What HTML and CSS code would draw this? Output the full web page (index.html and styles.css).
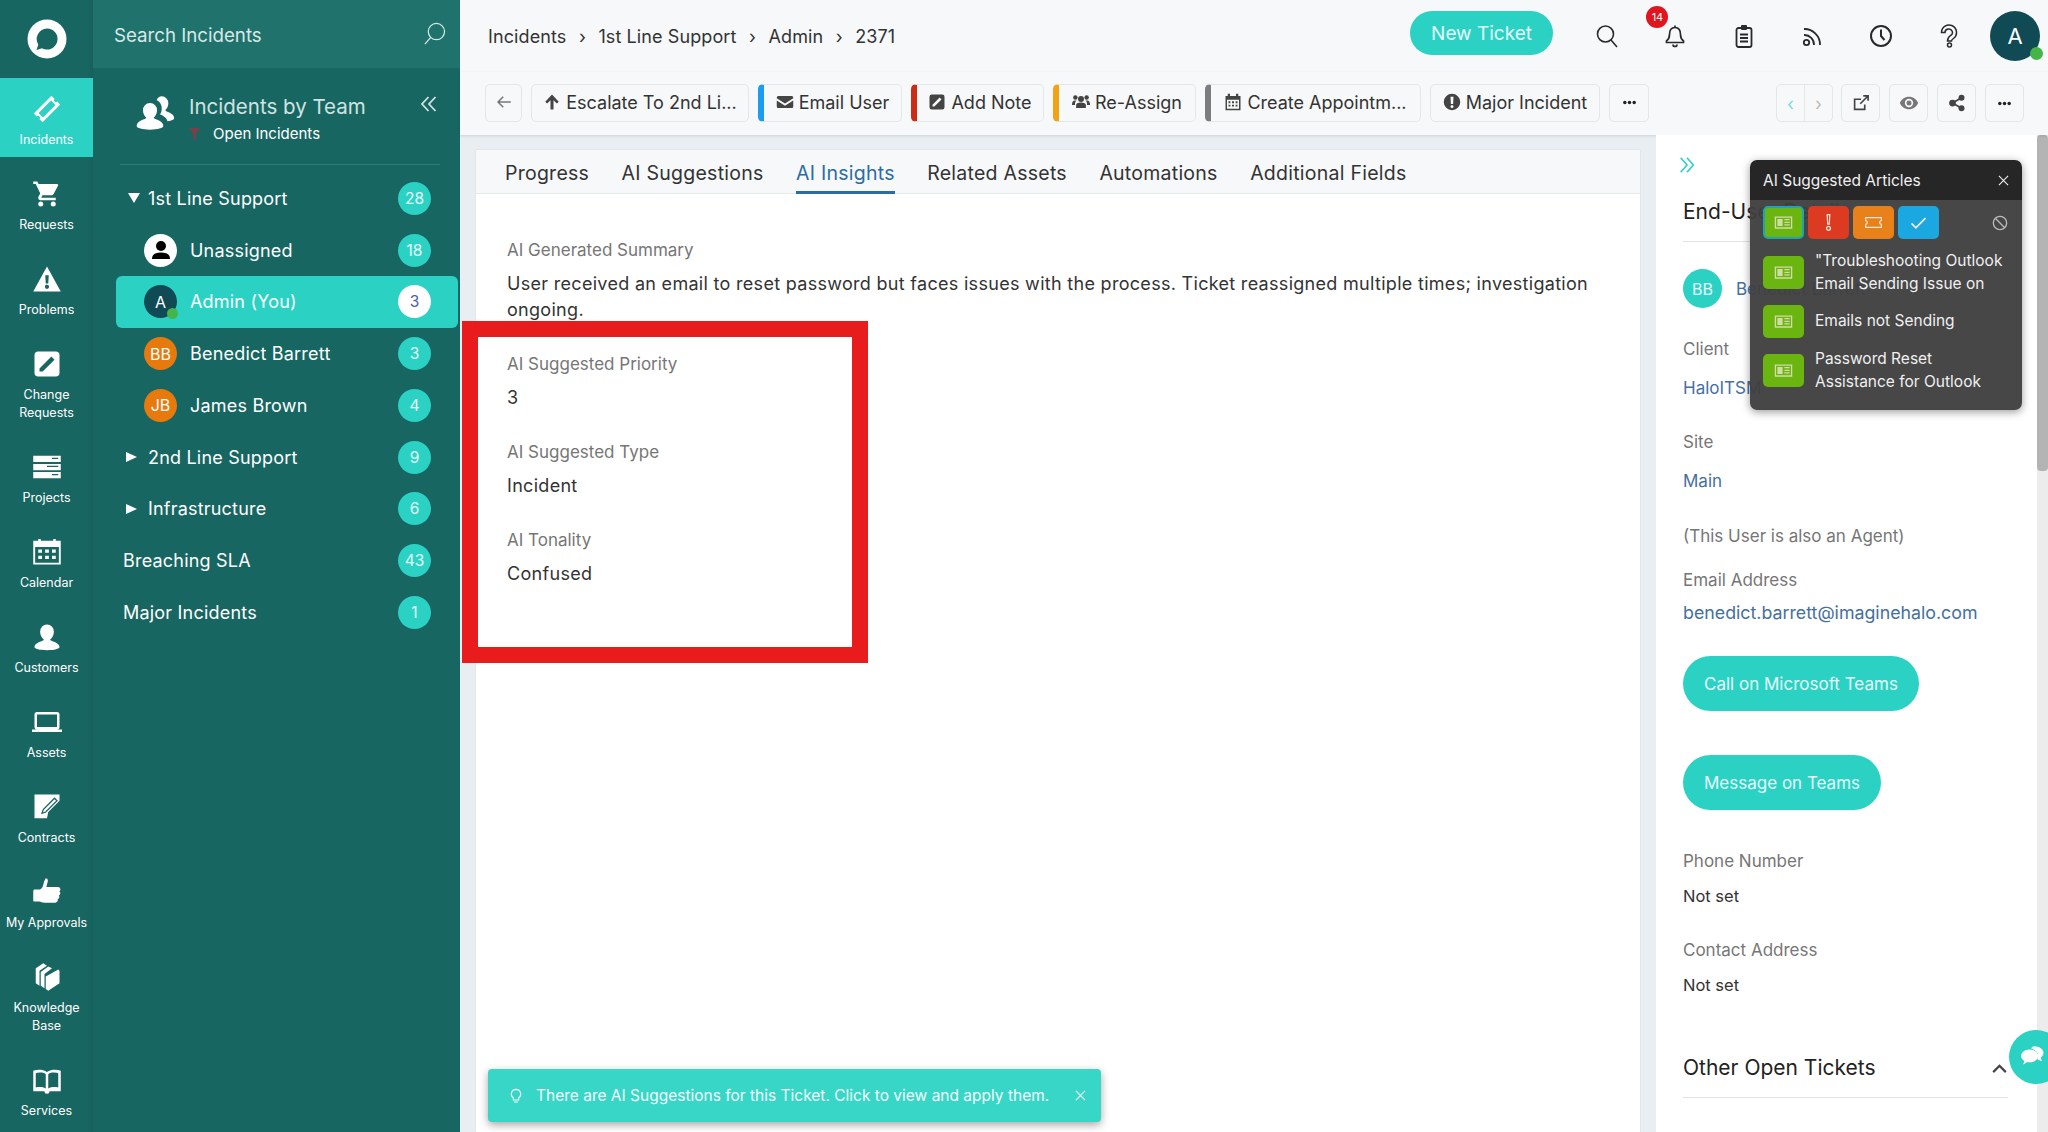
FILE: index.html
```html
<!DOCTYPE html>
<html lang="en">
<head>
    <meta charset="UTF-8">
    <meta name="viewport" content="width=device-width, initial-scale=1.0">
    <title>Incidents - 2371</title>
    <link rel="stylesheet" href="styles.css">
</head>
<body>
    <!-- shared icons -->
    <svg class="sprite" aria-hidden="true">
        <symbol id="i-cart" viewBox="0 0 24 24"><path d="M17 18a2 2 0 1 0 0 4 2 2 0 0 0 0-4zM1 2v2h2l3.600 7.600-1.400 2.400A2 2 0 0 0 7 17h12v-2H7.400l1-2h7.200c.7 0 1.400-.4 1.700-1L21 5a1 1 0 0 0-1-1H5.200l-.9-2zM7 18a2 2 0 1 0 0 4 2 2 0 0 0 0-4z"/></symbol>
        <symbol id="i-alert" viewBox="0 0 24 24"><path fill-rule="evenodd" d="M1 22 12 2l11 20zM10.600 9l.4 6.500h2l.4-6.500zM12 16.500a1.700 1.700 0 1 0 0 3.400 1.700 1.700 0 0 0 0-3.400z"/></symbol>
        <symbol id="i-edit" viewBox="0 0 24 24"><path fill-rule="evenodd" d="M5 2h14a3 3 0 0 1 3 3v14a3 3 0 0 1-3 3H5a3 3 0 0 1-3-3V5a3 3 0 0 1 3-3zm10.500 4L6 15.500V18h2.500L18 8.500z"/></symbol>
        <symbol id="i-user" viewBox="0 0 24 24"><path d="M12 2a5.500 5.500 0 0 1 5.500 6c0 2.500-1.500 5-3 6 0 1.500 7.500 2 7.500 6 0 1.500-4 2.500-10 2.500S2 21.500 2 20c0-4 7.500-4.500 7.500-6-1.500-1-3-3.500-3-6A5.500 5.500 0 0 1 12 2z"/></symbol>
        <symbol id="i-laptop" viewBox="0 0 24 24"><path d="M4 6h16v10H4zm16 12a2 2 0 0 0 2-2V6a2 2 0 0 0-2-2H4a2 2 0 0 0-2 2v10a2 2 0 0 0 2 2H0v2h24v-2z"/></symbol>
        <symbol id="i-thumb" viewBox="0 0 24 24"><path d="M11 1c1.500 0 2 1.500 1.500 3L11.500 8H21a2 2 0 0 1 1 3.500 2 2 0 0 1-.5 3.300 2 2 0 0 1-1 3 2 2 0 0 1-2 2.700H10c-2 0-3-1-4-1H2c-1 0-1-.5-1-1v-7c0-1 .5-1.500 1-1.500h4c2 0 3-3 3.500-6z"/></symbol>
        <symbol id="i-book" viewBox="0 0 24 24"><path fill-rule="evenodd" d="M1 4.500C4 3.500 9 3.500 12 5.500c3-2 8-2 11-1V21H14a2 2 0 0 1-4 0H1zM3 6.500V18c2.500-.5 5.500-.5 8 .7V7.300C9 5.800 5.500 5.800 3 6.500zm18 0c-2.500-.7-6-.7-8 .8v11.400c2.500-1.200 5.500-1.200 8-.7z"/></symbol>
        <symbol id="i-group" viewBox="0 0 24 24"><path d="M9 6a4.200 4.200 0 0 1 4.200 4.500c0 2-1 3.500-2 4.300 0 1 5.800 1.500 5.800 5 0 1.200-3.500 2.200-8 2.200s-8-1-8-2.200c0-3.500 5.800-4 5.800-5-1-.8-2-2.300-2-4.300A4.200 4.200 0 0 1 9 6zM16 2a4 4 0 0 1 4 4.300c0 1.800-1 3.300-1.800 4 0 1 5.300 1.500 5.300 4.700 0 1-1.500 1.700-4 2-.7-2.500-3-3.500-4.500-4.200.8-1.300 1.200-2.500 1-4.300-.2-2-1.500-3.500-3-4.300C13.700 2.800 14.800 2 16 2z"/></symbol>
        <symbol id="i-search" viewBox="0 0 24 24"><g fill="none" stroke="currentColor" stroke-width="1.600"><circle cx="10.500" cy="10" r="8"/><path d="m16 16 6 7"/></g></symbol>
        <symbol id="i-bell" viewBox="0 0 24 24"><g fill="none" stroke="currentColor" stroke-width="1.700"><path d="M12 3.500c-4 0-5.500 3-5.500 7 0 3-1 5-3 6.500v1.500h17V17c-2-1.500-3-3.500-3-6.500 0-4-1.500-7-5.500-7z"/><path d="M12 1.500v2M10 20.500a2 2 0 0 0 4 0"/></g></symbol>
        <symbol id="i-clip" viewBox="0 0 24 24"><g fill="none" stroke="currentColor" stroke-width="1.800"><rect x="4.500" y="4" width="15" height="19" rx="2"/><path d="M8 10.500h8M8 14h8M8 17.500h8"/></g><rect x="9" y="1" width="6" height="5" rx="1"/></symbol>
        <symbol id="i-rss" viewBox="0 0 24 24"><g fill="none" stroke="currentColor" stroke-width="1.800"><circle cx="6.500" cy="18.500" r="2.700"/><path d="M4 11a9.500 9.500 0 0 1 10 10M4 5a15.500 15.500 0 0 1 16 16"/></g></symbol>
        <symbol id="i-clock" viewBox="0 0 24 24"><g fill="none" stroke="currentColor" stroke-width="2"><circle cx="12" cy="12" r="10"/><path d="M12 5.500V12l3.500 4"/></g></symbol>
        <symbol id="i-help" viewBox="0 0 24 24"><g fill="none" stroke="currentColor" stroke-width="1.500"><path d="M4.500 8.500a7.500 7.500 0 1 1 12 6c-1.500 1-2 1.500-2 2.500h-4c0-3 1-4 3-5.500a3.700 3.500 0 1 0-5.500-3z"/><circle cx="12.500" cy="21" r="2"/></g></symbol>
        <symbol id="i-ticket" viewBox="0 0 24 24"><path fill-rule="evenodd" d="M2 7h20v3.500a1.500 1.500 0 0 0 0 3V17H2v-3.500a1.500 1.500 0 0 0 0-3zm3 2.500v5h14v-5z"/></symbol>
        <symbol id="i-article" viewBox="0 0 24 24"><path d="M2 5h20v14H2zm1.500 1.500v11h17v-11zM5 8h6v8H5zm8 0h6v1.500h-6zm0 3h6v1.500h-6zm0 3h6v1.500h-6z" fill-rule="evenodd"/></symbol>
        <symbol id="i-dots" viewBox="0 0 24 24"><circle cx="4.500" cy="12" r="2.800"/><circle cx="12" cy="12" r="2.800"/><circle cx="19.500" cy="12" r="2.800"/></symbol>
    </svg>

    <nav class="rail">
        <div class="rail-logo">
            <svg width="40" height="40" viewBox="0 0 40 40"><circle cx="20" cy="20" r="19.500" fill="#fff"/><path d="M20 9.500a10.500 10.500 0 1 1-5 19.700L9.500 31l1.800-5.500A10.500 10.500 0 0 1 20 9.500z" fill="#186662"/></svg>
        </div>
        <a class="rail-item active">
            <svg class="rail-icon tilted" viewBox="0 0 24 24"><use href="#i-ticket"/></svg>
            <span>Incidents</span>
        </a>
        <a class="rail-item">
            <svg class="rail-icon" viewBox="0 0 24 24"><use href="#i-cart"/></svg>
            <span>Requests</span>
        </a>
        <a class="rail-item">
            <svg class="rail-icon" viewBox="0 0 24 24"><use href="#i-alert"/></svg>
            <span>Problems</span>
        </a>
        <a class="rail-item tall">
            <svg class="rail-icon" viewBox="0 0 24 24"><use href="#i-edit"/></svg>
            <span>Change<br>Requests</span>
        </a>
        <a class="rail-item">
            <svg class="rail-icon" viewBox="0 0 24 24"><path d="M1 3h22v5H1zm0 6.500h22v5H1zM1 16h22v5H1z"/><path d="M16 5h5M12 11.500h9M16 18h5" stroke="#186662" stroke-width="1"/></svg>
            <span>Projects</span>
        </a>
        <a class="rail-item">
            <svg class="rail-icon" viewBox="0 0 24 24"><path fill-rule="evenodd" d="M5 1.500h2V3h10V1.500h2V3h4v19H1V3h4zM2.500 8v12.500h19V8zM5 10h3v2.500H5zm5.500 0h3v2.500h-3zm5.500 0h3v2.500h-3zM5 15h3v2.500H5zm5.500 0h3v2.500h-3zm5.500 0h3v2.500h-3z"/></svg>
            <span>Calendar</span>
        </a>
        <a class="rail-item">
            <svg class="rail-icon" viewBox="0 0 24 24"><use href="#i-user"/></svg>
            <span>Customers</span>
        </a>
        <a class="rail-item">
            <svg class="rail-icon" viewBox="0 0 24 24"><use href="#i-laptop"/></svg>
            <span>Assets</span>
        </a>
        <a class="rail-item">
            <svg class="rail-icon" viewBox="0 0 24 24"><path d="M2 2h20v5l-9 9-1 5H2z"/><path d="m8 17 1-3 9-9 2 2-9 9z" fill="#fff" stroke="#186662" stroke-width="1"/></svg>
            <span>Contracts</span>
        </a>
        <a class="rail-item">
            <svg class="rail-icon" viewBox="0 0 24 24"><use href="#i-thumb"/></svg>
            <span>My Approvals</span>
        </a>
        <a class="rail-item tall">
            <svg class="rail-icon" viewBox="0 0 24 24"><path d="M3 5 9 1l3 2-6 4v12l-3-2zm4 3 6-4.500 3 1.500-6 4.500V21l-3-2zm4 3.500L21 6c1 .5 1 1 1 2v9l-9 6-2-1.500z"/></svg>
            <span>Knowledge<br>Base</span>
        </a>
        <a class="rail-item">
            <svg class="rail-icon" viewBox="0 0 24 24"><use href="#i-book"/></svg>
            <span>Services</span>
        </a>
    </nav>

    <aside class="sidebar">
        <div class="side-search">
            <span>Search Incidents</span>
            <svg class="side-search-icon" viewBox="0 0 24 24"><g fill="none" stroke="currentColor" stroke-width="1.300"><circle cx="14" cy="10" r="8.500"/><path d="M8 16 2 23"/></g></svg>
        </div>
        <div class="side-head">
            <svg class="side-head-icon" viewBox="0 0 24 24"><use href="#i-group"/></svg>
            <div class="side-head-text">
                <div class="side-title">Incidents by Team</div>
                <div class="side-filter"><svg class="funnel" viewBox="0 0 12 14"><path d="M0 0h12L7.500 6v8L4.500 11V6z"/></svg>Open Incidents</div>
            </div>
            <svg class="side-collapse" viewBox="0 0 20 20"><path d="M9.500 3 3 10l6.500 7M16.500 3 10 10l6.500 7" fill="none" stroke="currentColor" stroke-width="1.800"/></svg>
        </div>
        <ul class="teams">
            <li class="team group"><span class="caret down"></span><span class="team-name">1st Line Support</span><span class="count">28</span></li>
            <li class="team member"><span class="avatar white"><svg width="24" height="24" viewBox="0 0 24 24"><circle cx="12" cy="8" r="5"/><path d="M3 21c0-5 4-6.500 9-6.500s9 1.500 9 6.500z"/></svg></span><span class="team-name">Unassigned</span><span class="count">18</span></li>
            <li class="team member selected"><span class="avatar navy">A<i class="dot"></i></span><span class="team-name">Admin (You)</span><span class="count">3</span></li>
            <li class="team member"><span class="avatar orange">BB</span><span class="team-name">Benedict Barrett</span><span class="count">3</span></li>
            <li class="team member"><span class="avatar orange">JB</span><span class="team-name">James Brown</span><span class="count">4</span></li>
            <li class="team group"><span class="caret right"></span><span class="team-name">2nd Line Support</span><span class="count">9</span></li>
            <li class="team group"><span class="caret right"></span><span class="team-name">Infrastructure</span><span class="count">6</span></li>
            <li class="team top"><span class="team-name">Breaching SLA</span><span class="count">43</span></li>
            <li class="team top"><span class="team-name">Major Incidents</span><span class="count">1</span></li>
        </ul>
    </aside>

    <div class="main">
        <header class="topbar">
            <div class="crumbs">
                <span>Incidents</span><b>›</b><span>1st Line Support</span><b>›</b><span>Admin</span><b>›</b><span>2371</span>
            </div>
            <button class="new-ticket">New Ticket</button>
            <div class="top-icons">
                <svg class="top-icon" viewBox="0 0 24 24"><use href="#i-search"/></svg>
                <span class="bell"><svg class="top-icon" viewBox="0 0 24 24"><use href="#i-bell"/></svg><em class="bell-count">14</em></span>
                <svg class="top-icon" viewBox="0 0 24 24"><use href="#i-clip"/></svg>
                <svg class="top-icon" viewBox="0 0 24 24"><use href="#i-rss"/></svg>
                <svg class="top-icon" viewBox="0 0 24 24"><use href="#i-clock"/></svg>
                <svg class="top-icon" viewBox="0 0 24 24"><use href="#i-help"/></svg>
            </div>
            <div class="top-avatar">A<i class="dot"></i></div>
        </header>

        <div class="toolbar">
            <div class="tools">
                <button class="tool"><svg class="tool-icon back" viewBox="0 0 24 24"><path d="M21 12H4m7-7-7 7 7 7" fill="none" stroke="currentColor" stroke-width="2"/></svg></button>
                <button class="tool"><svg class="tool-icon" viewBox="0 0 24 24"><path d="M12 2 3 11.500l2.500 2.500L10 9.500V22h4V9.500l4.500 4.500 2.500-2.500z"/></svg>Escalate To 2nd Li...</button>
                <button class="tool blue"><svg class="tool-icon" viewBox="0 0 24 24"><path d="M3 4h18a2 2 0 0 1 2 2v1l-11 7L1 7V6a2 2 0 0 1 2-2zM1 10l11 7 11-7v8a2 2 0 0 1-2 2H3a2 2 0 0 1-2-2z"/></svg>Email User</button>
                <button class="tool red"><svg class="tool-icon" viewBox="0 0 24 24"><use href="#i-edit"/></svg>Add Note</button>
                <button class="tool amber"><svg class="tool-icon" viewBox="0 0 24 24"><circle cx="12" cy="8" r="4"/><circle cx="4.500" cy="6" r="3"/><circle cx="19.500" cy="6" r="3"/><path d="M5.500 20v-4c0-2 2-3.500 6.500-3.500s6.500 1.500 6.500 3.500v4zM0 15c0-3 1.500-5 4-5h2c-1.500 1-2 2.500-2 5v1H0zm24 0c0-3-1.500-5-4-5h-2c1.500 1 2 2.500 2 5v1h4z"/></svg>Re-Assign</button>
                <button class="tool grey"><svg class="tool-icon" viewBox="0 0 24 24"><path fill-rule="evenodd" d="M5 1h3v3h8V1h3v3h3v19H2V4h3zM4 9v12h16V9zm2 2h2.500v2.500H6zm4.700 0h2.600v2.500h-2.600zm4.800 0H18v2.500h-2.500zM6 15.500h2.500V18H6zm4.700 0h2.600V18h-2.600zm4.800 0H18V18h-2.500z"/></svg>Create Appointm...</button>
                <button class="tool"><svg class="tool-icon" viewBox="0 0 24 24"><path fill-rule="evenodd" d="M12 1a11 11 0 1 1 0 22 11 11 0 0 1 0-22zm-2 4 .5 9.500h3L14 5zm2 11a2 2 0 1 0 0 4 2 2 0 0 0 0-4z"/></svg>Major Incident</button>
                <button class="tool"><svg class="tool-icon small" viewBox="0 0 24 24"><use href="#i-dots"/></svg></button>
            </div>
            <div class="tools-right">
                <div class="pager">
                    <button class="page teal">‹</button>
                    <button class="page">›</button>
                </div>
                <button class="tool square"><svg class="tool-icon" viewBox="0 0 24 24"><path d="M17 14v6.500H3.500V7H12M11 13 21 3M15 2.500h6.500V9" fill="none" stroke="currentColor" stroke-width="2.200"/></svg></button>
                <button class="tool square"><svg class="tool-icon eye" viewBox="0 0 24 24"><path fill-rule="evenodd" d="M12 4.500c5 0 9.300 3.100 11 7.500-1.700 4.400-6 7.500-11 7.500S2.700 16.400 1 12c1.700-4.400 6-7.500 11-7.500zM12 7a5 5 0 1 0 0 10 5 5 0 0 0 0-10zm0 2a3 3 0 1 1 0 6 3 3 0 0 1 0-6z"/></svg></button>
                <button class="tool square"><svg class="tool-icon" viewBox="0 0 24 24"><circle cx="6" cy="12" r="4.500"/><circle cx="18" cy="5" r="4"/><circle cx="18" cy="19" r="4"/><path d="m6 12 12-7M6 12l12 7" stroke="currentColor" stroke-width="2.500"/></svg></button>
                <button class="tool square"><svg class="tool-icon small" viewBox="0 0 24 24"><use href="#i-dots"/></svg></button>
            </div>
        </div>

        <div class="content">
            <section class="panel">
                <div class="tabs">
                    <span class="tab">Progress</span>
                    <span class="tab">AI Suggestions</span>
                    <span class="tab active">AI Insights</span>
                    <span class="tab">Related Assets</span>
                    <span class="tab">Automations</span>
                    <span class="tab">Additional Fields</span>
                </div>
                <div class="insights">
                    <div class="field">
                        <div class="label">AI Generated Summary</div>
                        <p class="value summary">User received an email to reset password but faces issues with the process. Ticket reassigned multiple times; investigation ongoing.</p>
                    </div>
                    <div class="field">
                        <div class="label">AI Suggested Priority</div>
                        <p class="value">3</p>
                    </div>
                    <div class="field">
                        <div class="label">AI Suggested Type</div>
                        <p class="value">Incident</p>
                    </div>
                    <div class="field">
                        <div class="label">AI Tonality</div>
                        <p class="value">Confused</p>
                    </div>
                </div>
                <div class="callout"></div>
                <div class="toast">
                    <svg class="toast-bulb" viewBox="0 0 24 24"><path d="M12 2a7 7 0 0 0-4 12.700V18h8v-3.300A7 7 0 0 0 12 2zM9 21h6" fill="none" stroke="currentColor" stroke-width="1.800"/></svg>
                    <span class="toast-text">There are AI Suggestions for this Ticket. Click to view and apply them.</span>
                    <svg class="toast-close" viewBox="0 0 12 12"><path d="m1 1 10 10M11 1 1 11" stroke="currentColor" stroke-width="1.200"/></svg>
                </div>
            </section>

            <aside class="details">
                <svg class="details-toggle" viewBox="0 0 20 20"><path d="m3 2 7 8-7 8M10 2l7 8-7 8" fill="none" stroke="currentColor" stroke-width="1.800"/></svg>
                <h2 class="details-title">End-User Details</h2>
                <div class="details-user"><span class="avatar teal-avatar">BB</span><a class="link">Benedict Barrett</a></div>
                <div class="label">Client</div>
                <a class="link block">HaloITSM</a>
                <div class="label">Site</div>
                <a class="link block">Main</a>
                <div class="label note">(This User is also an Agent)</div>
                <div class="label">Email Address</div>
                <a class="link block email">benedict.barrett@imaginehalo.com</a>
                <button class="pill">Call on Microsoft Teams</button>
                <button class="pill">Message on Teams</button>
                <div class="label phone-label">Phone Number</div>
                <p class="value small">Not set</p>
                <div class="label">Contact Address</div>
                <p class="value small">Not set</p>
                <div class="other-head">
                    <h2>Other Open Tickets</h2>
                    <svg class="chevron" viewBox="0 0 16 10"><path d="m1 9 7-7 7 7" fill="none" stroke="currentColor" stroke-width="2.500"/></svg>
                </div>

                <div class="popover">
                    <div class="pop-head">
                        <span>AI Suggested Articles</span>
                        <svg class="pop-close" viewBox="0 0 12 12"><path d="m1 1 10 10M11 1 1 11" stroke="currentColor" stroke-width="1.200"/></svg>
                    </div>
                    <div class="pop-body">
                        <div class="pop-filters">
                            <span class="chip green on"><svg viewBox="0 0 24 24"><use href="#i-article"/></svg></span>
                            <span class="chip red-chip"><svg viewBox="0 0 24 24"><path d="M10.500 3h3l-.6 11h-1.800zM12 16.500a2.200 2.200 0 1 0 0 4.400 2.200 2.200 0 0 0 0-4.400z" fill="none" stroke="currentColor" stroke-width="1.400"/></svg></span>
                            <span class="chip orange-chip"><svg viewBox="0 0 24 24"><path d="M3 6.500h18V10a2 2 0 0 0 0 4v3.500H3V14a2 2 0 0 0 0-4z" fill="none" stroke="currentColor" stroke-width="1.400"/></svg></span>
                            <span class="chip blue-chip"><svg viewBox="0 0 24 24"><path d="m4 13 5 5L20 7" fill="none" stroke="currentColor" stroke-width="2"/></svg></span>
                            <svg class="pop-ban" viewBox="0 0 24 24"><g fill="none" stroke="currentColor" stroke-width="2"><circle cx="12" cy="12" r="10"/><path d="m5 5 14 14"/></g></svg>
                        </div>
                        <div class="pop-row"><span class="chip green"><svg viewBox="0 0 24 24"><use href="#i-article"/></svg></span><span class="pop-text">"Troubleshooting Outlook Email Sending Issue on</span></div>
                        <div class="pop-row"><span class="chip green"><svg viewBox="0 0 24 24"><use href="#i-article"/></svg></span><span class="pop-text">Emails not Sending</span></div>
                        <div class="pop-row"><span class="chip green"><svg viewBox="0 0 24 24"><use href="#i-article"/></svg></span><span class="pop-text">Password Reset<br>Assistance for Outlook</span></div>
                    </div>
                </div>

                <div class="chat-bubble"><svg viewBox="0 0 30 24"><path d="M9 5c4.400 0 8 2.700 8 6s-3.600 6-8 6c-.8 0-1.500 0-2.200-.2L3 19l1-3.300C2.300 14.600 1 13 1 11c0-3.300 3.600-6 8-6z"/><path d="M13 2c5 0 9 2.700 9 6 0 1.800-1 3.300-2.500 4.400l1 3.600-4.300-2c.5-1 .8-2 .8-3 0-3.500-3-6-6.500-7 .8-1.300 1.700-2 2.500-2z"/></svg></div>
            </aside>
            <div class="scrollbar"><div class="thumb"></div></div>
        </div>
    </div>
</body>
</html>
```

FILE: styles.css
```css
* {
    box-sizing: border-box;
}
html, body {
    margin: 0;
    height: 1132px;
    overflow: hidden;
}
body {
    display: flex;
    font-family: Inter, "Open Sans", sans-serif;
    color: #333;
    background-color: #e9eef3;
}
p {
    margin: 0;
}
h2 {
    margin: 0;
    font-weight: 400;
}
button {
    font-family: inherit;
    cursor: pointer;
}
.sprite {
    display: none;
}

/* left icon rail */
.rail {
    width: 93px;
    flex: none;
    background-color: #186662;
    color: #fff;
    box-shadow: inset -6px 0 6px -6px rgba(0, 0, 0, 0.12);
}
.rail-logo {
    height: 78px;
    display: flex;
    align-items: center;
    justify-content: center;
}
.rail-item {
    display: flex;
    flex-direction: column;
    align-items: center;
    min-height: 79px;
    margin-bottom: 6px;
    padding-top: 16px;
    font-size: 12.5px;
    line-height: 18px;
    text-align: center;
}
.rail-item.tall {
    margin-bottom: 14px;
}
.rail-item.active {
    background-color: #2bd2c4;
}
.rail-icon {
    width: 30px;
    height: 30px;
    margin-bottom: 7px;
    fill: #fff;
}
.tilted {
    transform: rotate(-45deg);
}

/* sidebar with the team list */
.sidebar {
    width: 367px;
    flex: none;
    background-color: #186662;
    color: #fff;
}
.side-search {
    height: 68px;
    padding: 2px 14px 0 21px;
    display: flex;
    align-items: center;
    justify-content: space-between;
    background-color: #20736d;
    font-size: 18.7px;
    color: #d8e8e6;
}
.side-search-icon {
    width: 23px;
    height: 23px;
    margin-top: -4px;
}
.side-head {
    height: 97px;
    margin: 0 20px 0 27px;
    padding: 25px 0 0 15px;
    display: flex;
    border-bottom: 1px solid #2f7c77;
}
.side-head-icon {
    width: 40px;
    height: 40px;
    fill: #fff;
}
.side-head-text {
    margin-left: 14px;
    flex: 1;
}
.side-title {
    font-size: 20.5px;
    line-height: 28px;
    color: #cfe3e1;
}
.side-filter {
    display: flex;
    align-items: center;
    margin-top: 3px;
    margin-left: -5px;
    font-size: 15px;
    line-height: 20px;
}
.funnel {
    width: 11px;
    height: 13px;
    margin: 0 13px 0 5px;
    fill: #7a3f48;
}
.side-collapse {
    width: 20px;
    height: 20px;
    margin-top: 1px;
    margin-right: 1px;
    color: #cfe3e1;
}
.teams {
    list-style: none;
    margin: 7.5px 0 0 23px;
    padding: 0;
}
.team {
    height: 51.75px;
    display: flex;
    align-items: center;
    padding-right: 29px;
    font-size: 18px;
    letter-spacing: 0.2px;
    border-radius: 6px;
}
.team-name {
    flex: 1;
}
.team.member {
    padding-left: 28px;
}
.team.top {
    padding-left: 7px;
}
.team.selected {
    background-color: #2bd2c4;
    margin-right: 2px;
    padding-right: 27px;
}
.caret {
    width: 0;
    height: 0;
}
.caret.down {
    margin: 0 8px 0 12px;
    border-left: 6px solid transparent;
    border-right: 6px solid transparent;
    border-top: 10px solid #fff;
}
.caret.right {
    margin: 0 11px 0 10px;
    border-top: 5px solid transparent;
    border-bottom: 5px solid transparent;
    border-left: 11px solid #fff;
}
.avatar {
    position: relative;
    width: 33px;
    height: 33px;
    margin-right: 13px;
    flex: none;
    display: flex;
    align-items: center;
    justify-content: center;
    border-radius: 50%;
    font-size: 16px;
    letter-spacing: 0;
}
.avatar.white {
    background-color: #fff;
}
.avatar.navy {
    background-color: #0f4a55;
}
.avatar.orange {
    background-color: #e8790c;
}
.dot {
    position: absolute;
    right: -1px;
    bottom: -1px;
    width: 11px;
    height: 11px;
    border-radius: 50%;
    background-color: #46b549;
}
.count {
    width: 33px;
    height: 33px;
    display: flex;
    align-items: center;
    justify-content: center;
    border-radius: 50%;
    background-color: #2bd2c4;
    font-size: 15.5px;
    letter-spacing: 0;
    color: #e6fbf9;
}
.team.selected .count {
    background-color: #fff;
    color: #4a5fa5;
}

/* top bar */
.main {
    flex: 1;
    display: flex;
    flex-direction: column;
    min-width: 0;
    height: 1132px;
}
.topbar {
    height: 72px;
    padding: 0 8px 0 28px;
    display: flex;
    align-items: center;
    background-color: #f6f8fa;
}
.crumbs {
    flex: 1;
    display: flex;
    align-items: center;
    font-size: 18px;
    letter-spacing: 0.1px;
}
.crumbs b {
    margin: 0 12.5px;
    font-weight: 400;
}
.new-ticket {
    width: 143px;
    height: 44px;
    margin-top: -6px;
    border: 0;
    border-radius: 22px;
    background-color: #2bd2c4;
    color: #e6fbf9;
    font-size: 19px;
}
.top-icons {
    display: flex;
    align-items: center;
    gap: 44.4px;
    margin: 0 29px 0 42px;
}
.top-icon {
    display: block;
    width: 24px;
    height: 24px;
    fill: currentColor;
    color: #2a2a2a;
}
.bell {
    position: relative;
}
.bell-count {
    position: absolute;
    top: -18px;
    left: -17px;
    width: 22px;
    height: 22px;
    border-radius: 50%;
    background-color: #e1141f;
    color: #fff;
    font-size: 11px;
    font-style: normal;
    line-height: 22px;
    text-align: center;
}
.top-avatar {
    position: relative;
    width: 50px;
    height: 50px;
    border-radius: 50%;
    background-color: #0f4a55;
    color: #fff;
    font-size: 22px;
    line-height: 50px;
    text-align: center;
}
.top-avatar .dot {
    right: -3px;
    bottom: 1px;
    width: 13px;
    height: 13px;
}

/* action buttons */
.toolbar {
    height: 63px;
    padding: 12px 24px 13px 25px;
    display: flex;
    justify-content: space-between;
    background-color: #f6f8fa;
    box-shadow: 0 1px 3px rgba(0, 0, 0, 0.12);
    position: relative;
}
.tools {
    display: grid;
    grid-template-columns: 37px 218px 144px 133px 143px 216px 170px 40px;
    gap: 9px;
}
.tools-right {
    display: flex;
    gap: 9px;
}
.tool {
    height: 38px;
    padding: 0 0 2px;
    display: flex;
    align-items: center;
    justify-content: center;
    gap: 5px;
    border: 1px solid #e4e7ea;
    border-radius: 5px;
    background-color: #f7f8f9;
    color: #333;
    font-size: 18px;
    white-space: nowrap;
}
.tool.blue {
    border-left: 6px solid #1a9df0;
}
.tool.red {
    border-left: 6px solid #cc2c16;
}
.tool.amber {
    border-left: 6px solid #f2a313;
}
.tool.grey {
    border-left: 6px solid #7d7d7d;
}
.tool.square {
    width: 39px;
    padding: 0;
}
.tool-icon {
    width: 18px;
    height: 18px;
    flex: none;
    fill: #444;
    color: #444;
}
.tool-icon.back {
    color: #777;
}
.tool-icon.small {
    width: 15px;
    height: 15px;
    fill: #222;
}
.tool-icon.eye {
    width: 20px;
    height: 20px;
    fill: #777;
}
.pager {
    display: flex;
    width: 57px;
    height: 38px;
    margin-right: -1px;
    border: 1px solid #e4e7ea;
    border-radius: 5px;
}
.page {
    flex: 1;
    padding: 0;
    border: 0;
    background: transparent;
    color: #bbb;
    font-size: 18px;
}
.page.teal {
    color: #7fdcd4;
    border-right: 1px solid #e4e7ea;
}

/* ticket content */
.content {
    flex: 1;
    min-height: 0;
    display: flex;
    padding-left: 16px;
}
.panel {
    position: relative;
    width: 1164px;
    margin-top: 15px;
    margin-right: 16px;
    background-color: #fff;
    box-shadow: 0 0 1px rgba(0, 0, 0, 0.2);
}
.tabs {
    height: 44px;
    padding-left: 29px;
    display: flex;
    gap: 32.5px;
    background-color: #f6f8fa;
    border-bottom: 1px solid #e6e9ec;
}
.tab {
    height: 44px;
    font-size: 19.5px;
    line-height: 47px;
    letter-spacing: 0.25px;
    color: #333;
}
.tab.active {
    color: #2d6ca2;
    border-bottom: 3px solid #2d6ca2;
}
.insights {
    padding: 45px 24px 0 31px;
}
.field {
    margin-bottom: 30px;
}
.label {
    font-size: 17px;
    line-height: 22px;
    color: #767676;
}
.value {
    margin-top: 10px;
    font-size: 18px;
    line-height: 26px;
    letter-spacing: 0.3px;
    color: #333;
}
.value.summary {
    margin-top: 10px;
    margin-bottom: 2px;
}
.callout {
    position: absolute;
    left: -14px;
    top: 171px;
    width: 406px;
    height: 342px;
    border: 16px solid #e81c1c;
}
.toast {
    position: absolute;
    left: 12px;
    bottom: 10px;
    width: 613px;
    height: 53px;
    padding: 0 15px 0 20px;
    display: flex;
    align-items: center;
    background-color: #38d6c6;
    border-radius: 4px;
    box-shadow: 0 3px 8px rgba(0, 0, 0, 0.35);
    color: #f2fdfc;
    font-size: 15.5px;
}
.toast-bulb {
    width: 16px;
    height: 16px;
    flex: none;
    margin-right: 12px;
}
.toast-text {
    flex: 1;
}
.toast-close {
    width: 11px;
    height: 11px;
}

/* right hand details */
.details {
    position: relative;
    width: 381px;
    padding: 0 29px 0 27px;
    background-color: #fff;
}
.details-toggle {
    display: block;
    width: 18px;
    height: 18px;
    margin: 21px 0 0 -5px;
    color: #2bd2c4;
}
.details-title {
    margin-top: 24px;
    padding-bottom: 15px;
    font-size: 21px;
    line-height: 28px;
    color: #222;
    border-bottom: 1px solid #dfe3e6;
    white-space: nowrap;
}
.details-user {
    display: flex;
    align-items: center;
    margin: 27px 0 30px;
    font-size: 17px;
}
.avatar.teal-avatar {
    width: 39px;
    height: 39px;
    margin-right: 14px;
    background-color: #2bd2c4;
    color: #e6fbf9;
}
.link {
    color: #456fa0;
}
.link.block {
    display: block;
    margin: 17px 0 32px;
    font-size: 17px;
    line-height: 22px;
}
.label.note {
    margin-top: 33px;
    margin-bottom: 22px;
}
.link.block.email {
    margin: 11px 0 32px;
    font-size: 17.8px;
}
.pill {
    display: block;
    height: 55px;
    margin-bottom: 44px;
    padding: 0 21px;
    border: 0;
    border-radius: 28px;
    background-color: #2bd2c4;
    color: #e6fbf9;
    font-size: 17px;
}
.label.phone-label {
    margin-top: -4px;
}
.value.small {
    margin: 13px 0 32px;
    font-size: 16.5px;
    line-height: 22px;
    letter-spacing: 0;
}
.other-head {
    display: flex;
    align-items: center;
    justify-content: space-between;
    margin-top: 58px;
    padding-bottom: 15px;
    border-bottom: 1px solid #dfe3e6;
}
.other-head h2 {
    font-size: 21px;
    line-height: 28px;
    color: #222;
}
.chevron {
    width: 15px;
    height: 9px;
    margin-right: 1px;
    color: #444;
}

/* floating article list */
.popover {
    position: absolute;
    left: 94px;
    top: 25px;
    width: 272px;
    height: 250px;
    border-radius: 7px;
    overflow: hidden;
    box-shadow: 0 2px 8px rgba(0, 0, 0, 0.4);
    color: #f0f0f0;
}
.pop-head {
    height: 40px;
    padding: 0 13px;
    display: flex;
    align-items: center;
    justify-content: space-between;
    background-color: #262626;
    font-size: 15.5px;
}
.pop-close {
    width: 11px;
    height: 11px;
}
.pop-body {
    height: 210px;
    padding: 6px 13px;
    background-color: rgba(64, 64, 64, 0.96);
}
.pop-filters {
    display: flex;
    align-items: center;
    gap: 4px;
    margin-bottom: 11px;
}
.chip {
    width: 41px;
    height: 33px;
    flex: none;
    display: flex;
    align-items: center;
    justify-content: center;
    border-radius: 5px;
    color: #f4e9d8;
}
.chip svg {
    width: 21px;
    height: 21px;
    fill: currentColor;
}
.chip.green {
    background-color: #6bb510;
}
.chip.green svg {
    opacity: 0.75;
}
.chip.on {
    border: 2px solid #1aa5b8;
}
.red-chip {
    background-color: #dc3a21;
}
.orange-chip {
    background-color: #e8811a;
}
.blue-chip {
    background-color: #1ba8e0;
}
.pop-ban {
    width: 16px;
    height: 16px;
    margin-left: auto;
    margin-right: 1px;
    color: #b9b9b9;
}
.pop-row {
    display: flex;
    align-items: center;
    gap: 11px;
    margin-bottom: 10px;
    min-height: 33px;
}
.pop-text {
    font-size: 15.5px;
    line-height: 22.5px;
}
.chat-bubble {
    position: absolute;
    left: 353px;
    bottom: 48px;
    width: 54px;
    height: 54px;
    padding: 14px 0 0 11px;
    border-radius: 50%;
    background-color: #2bd2c4;
    z-index: 1;
}
.chat-bubble svg {
    display: block;
    width: 32px;
    height: 26px;
    fill: #fff;
}
.scrollbar {
    width: 11px;
    background-color: #ececec;
}
.thumb {
    height: 336px;
    border-radius: 4px;
    background-color: #b4b4b4;
}
```
